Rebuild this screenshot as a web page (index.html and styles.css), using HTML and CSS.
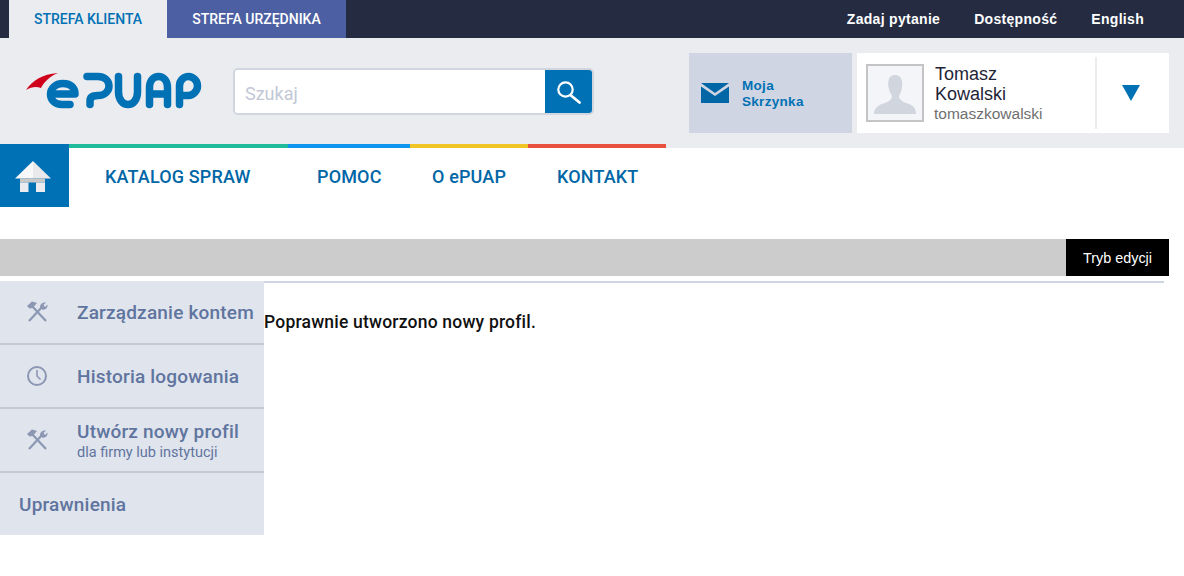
FILE: index.html
```html
<!DOCTYPE html>
<html lang="pl">
  <head>
    <meta charset="UTF-8" />
    <title>ePUAP</title>
    <link rel="stylesheet" href="styles.css">
  </head>
  <body>
    <div class="topbar">
      <div class="zones">
        <a class="zone zone-active">STREFA KLIENTA</a>
        <a class="zone">STREFA URZĘDNIKA</a>
      </div>
      <div class="top-links">
        <a>Zadaj pytanie</a>
        <a>Dostępność</a>
        <a>English</a>
      </div>
    </div>

    <header class="masthead">
      <div class="logo">
        <svg width="178" height="40" viewBox="0 0 178 40">
          <path d="M1 20 C7 11 17 4 33 3 C25 6 19 12 16 18 C11 16 6 17 1 20 Z" fill="#d0021b" />
          <g fill="none" stroke="#0071b5" stroke-width="7.500" stroke-linecap="round" stroke-linejoin="round">
            <path d="M27 24 H50 C50 17 45 13.500 38 13.500 C30 13.500 25.500 19 25.500 24 C25.500 30 30 34.500 37 34.500 H45" />
            <path d="M62 6.500 H73 C80 6.500 84 11 84 16 C84 21 80 25.500 73 25.500 C68 25.500 65 27 65 31 V34.500" />
            <path d="M93.500 6.500 V22 C93.500 30 98 34.500 103 34.500 C108 34.500 112.500 30 112.500 22 V6.500" />
            <path d="M124.500 34.500 V18 C124.500 10 129 6.500 133.500 6.500 C138 6.500 142.500 10 142.500 18 V34.500 M124.500 24 H142.500" />
            <path d="M154.500 34.500 V16 C154.500 10 159 6.500 163.500 6.500 C168 6.500 172.500 10.500 172.500 16 C172.500 21 168 25.500 163.500 25.500 H157" />
          </g>
        </svg>
      </div>
      <form class="search">
        <input class="search-input" type="text" placeholder="Szukaj" />
        <button class="search-btn" type="button">
          <svg width="26" height="26" viewBox="0 0 26 26" fill="none" stroke="#fff" stroke-width="2.200">
            <circle cx="9.500" cy="10.500" r="7.200" />
            <path d="M15 16.500 L23.500 23.500" stroke-width="2.800" stroke-linecap="round" />
          </svg>
        </button>
      </form>
      <a class="mailbox">
        <svg width="28" height="20" viewBox="0 0 28 20" fill="#0066a6">
          <path d="M0 0 H28 L14 10 Z" />
          <path d="M0 3.500 L14 13 L28 3.500 V20 H0 Z" />
        </svg>
        <span class="mailbox-label">Moja<br>Skrzynka</span>
      </a>
      <div class="user">
        <div class="avatar">
          <svg width="54" height="54" viewBox="0 0 54 54" fill="#d0d5de">
            <path d="M27 9 C33 9 35 14 34 21 C33.500 25 32 28 31 30 C31 34 35 36 41 38 C46 40 48 43 48 48 H6 C6 43 9 40 14 38 C20 36 24 34 24 30 C23 28 21 25 20.500 21 C19.500 14 21 9 27 9 Z" />
          </svg>
        </div>
        <div class="user-info">
          <div class="user-name">Tomasz Kowalski</div>
          <div class="user-login">tomaszkowalski</div>
        </div>
        <div class="user-toggle"><span class="arrow"></span></div>
      </div>
    </header>

    <nav class="mainnav">
      <a class="home">
        <svg width="36" height="32" viewBox="0 0 36 32">
          <path d="M18 0 L36 17.500 H18 Z" fill="#e9e9ec" />
          <path d="M18 0 L0 17.500 H18 Z" fill="#f8f8f8" />
          <path d="M5 17.500 H30 V21.500 H5 Z" fill="#c9c9c9" />
          <path d="M5 21.500 H13.500 V31 H5 Z M21 21.500 H30 V31 H21 Z" fill="#ebecf0" />
        </svg>
      </a>
      <div class="nav-items">
        <a class="nav-item nav-green">KATALOG SPRAW</a>
        <a class="nav-item nav-blue">POMOC</a>
        <a class="nav-item nav-yellow">O ePUAP</a>
        <a class="nav-item nav-red">KONTAKT</a>
      </div>
    </nav>

    <div class="editbar">
      <a class="edit-btn">Tryb edycji</a>
    </div>

    <main class="layout">
      <aside class="sidemenu">
        <a class="side-item">
          <svg class="side-icon" width="22" height="22" viewBox="0 0 22 22" fill="none" stroke="#8b97b3" stroke-width="2.200">
            <path d="M6 5 L20 20" />
            <path d="M17 5 L3 20" />
            <path d="M1 5 L6 0.500 L11 2 L6.500 7 L3.500 7.500 Z" fill="#8b97b3" stroke="none" />
            <path d="M14 6 C14 3 17 1 20 1.500 L17.500 4 L19 6 L21.500 3.500 C22 7 19 9.500 16 8.500 Z" fill="#8b97b3" stroke="none" />
          </svg>
          <span class="side-title">Zarządzanie kontem</span>
        </a>
        <a class="side-item">
          <svg class="side-icon" width="22" height="22" viewBox="0 0 22 22" fill="none" stroke="#8b97b3" stroke-width="2">
            <circle cx="11" cy="11" r="9" />
            <path d="M11 5 V11 L14.500 14.500" stroke-width="1.600" />
          </svg>
          <span class="side-title">Historia logowania</span>
        </a>
        <a class="side-item">
          <svg class="side-icon" width="22" height="22" viewBox="0 0 22 22" fill="none" stroke="#8b97b3" stroke-width="2.200">
            <path d="M6 5 L20 20" />
            <path d="M17 5 L3 20" />
            <path d="M1 5 L6 0.500 L11 2 L6.500 7 L3.500 7.500 Z" fill="#8b97b3" stroke="none" />
            <path d="M14 6 C14 3 17 1 20 1.500 L17.500 4 L19 6 L21.500 3.500 C22 7 19 9.500 16 8.500 Z" fill="#8b97b3" stroke="none" />
          </svg>
          <span>
            <span class="side-title">Utwórz nowy profil</span>
            <span class="side-sub">dla firmy lub instytucji</span>
          </span>
        </a>
        <a class="side-item side-plain">
          <span class="side-title">Uprawnienia</span>
        </a>
      </aside>
      <section class="content">
        <p class="message">Poprawnie utworzono nowy profil.</p>
      </section>
    </main>
  </body>
</html>
```

FILE: styles.css
```css
* {
  box-sizing: border-box;
}

body {
  margin: 0;
  background-color: #ffffff;
  font-family: "Liberation Sans", Arial, sans-serif;
  color: #000;
}

a {
  text-decoration: none;
}

/* top bar */
.topbar {
  display: flex;
  justify-content: space-between;
  height: 38px;
  background-color: #252c42;
  padding-left: 9px;
}

.zones {
  display: flex;
}

.zone {
  display: flex;
  align-items: center;
  justify-content: center;
  width: 179px;
  background-color: #4d5fa3;
  color: #fff;
  font-family: Roboto, sans-serif;
  font-size: 14px;
  font-weight: 500;
}

.zone-active {
  width: 158px;
  background-color: #ebecf0;
  color: #0071b5;
}

.top-links {
  display: flex;
  align-items: center;
  gap: 34px;
  padding-right: 40px;
}

.top-links a {
  color: #fff;
  font-size: 14px;
  font-weight: 700;
  letter-spacing: 0.3px;
}

/* header */
.masthead {
  display: flex;
  height: 110px;
  background-color: #ebecf0;
  padding: 15px 15px 0 25px;
}

.logo {
  width: 208px;
  padding-top: 17px;
}

.search {
  display: flex;
  width: 361px;
  height: 47px;
  margin-top: 15px;
  border: 2px solid #d0d5e0;
  border-radius: 5px;
  background-color: #fff;
  overflow: hidden;
}

.search-input {
  flex: 1;
  min-width: 0;
  padding: 3px 10px 0;
  border: none;
  outline: none;
  font-family: Roboto, sans-serif;
  font-size: 18px;
}

.search-input::placeholder {
  color: #c2c8d6;
  opacity: 1;
}

.search-btn {
  display: flex;
  align-items: center;
  justify-content: center;
  width: 47px;
  padding: 0;
  border: none;
  background-color: #0071b5;
}

.mailbox {
  display: flex;
  align-items: center;
  gap: 13px;
  width: 163px;
  height: 80px;
  margin-left: 95px;
  padding-left: 12px;
  background-color: #cfd5e2;
  color: #0071b5;
  font-size: 13.500px;
  font-weight: 700;
  line-height: 16px;
  letter-spacing: 0.3px;
}

.mailbox-label {
  padding-top: 2px;
}

.user {
  display: flex;
  width: 312px;
  height: 80px;
  margin-left: 5px;
  padding: 4px 0 4px 9px;
  background-color: #fff;
}

.avatar {
  width: 58px;
  height: 58px;
  margin-top: 7px;
  border: 2px solid #c4c4c4;
  background-color: #f4f5f8;
  flex-shrink: 0;
}

.user-info {
  width: 171px;
  padding: 7px 0 0 10px;
}

.user-name {
  width: 90px;
  padding-left: 1px;
  color: #1f2437;
  font-size: 18px;
  line-height: 20px;
}

.user-login {
  color: #6f6f6f;
  font-size: 15.500px;
  line-height: 20px;
}

.user-toggle {
  display: flex;
  align-items: center;
  justify-content: center;
  flex: 1;
  padding-right: 4px;
  border-left: 2px solid #ebecf0;
}

.arrow {
  width: 0;
  height: 0;
  border-left: 9px solid transparent;
  border-right: 9px solid transparent;
  border-top: 16px solid #0071b5;
}

/* main navigation */
.mainnav {
  display: flex;
  height: 63px;
  margin-top: -4px;
}

.home {
  display: flex;
  justify-content: center;
  align-items: flex-start;
  width: 69px;
  padding: 17px 3px 0 0;
  background-color: #0071b5;
}

.nav-items {
  display: flex;
}

.nav-item {
  height: 63px;
  padding-top: 18px;
  border-top: 4px solid;
  color: #0066a6;
  font-family: Roboto, sans-serif;
  font-size: 18px;
  font-weight: 500;
  letter-spacing: 0.15px;
  background-color: #fff;
}

.nav-green {
  width: 219px;
  padding-left: 36px;
  border-color: #1fbc9c;
}

.nav-blue {
  width: 122px;
  padding-left: 29px;
  border-color: #0d96ef;
}

.nav-yellow {
  width: 118px;
  padding-left: 22px;
  border-color: #f0c424;
}

.nav-red {
  width: 138px;
  padding-left: 29px;
  border-color: #e9503e;
}

/* edit bar */
.editbar {
  display: flex;
  justify-content: flex-end;
  height: 37px;
  margin: 32px 15px 0 0;
  background-color: #cccccc;
}

.edit-btn {
  display: flex;
  align-items: center;
  justify-content: center;
  width: 103px;
  background-color: #000;
  color: #fff;
  font-size: 14.400px;
}

/* page body */
.layout {
  display: flex;
  margin-top: 5px;
}

.sidemenu {
  width: 264px;
  flex-shrink: 0;
  background-color: #e0e4ed;
}

.side-item {
  display: flex;
  align-items: center;
  height: 64px;
  padding-left: 26px;
  gap: 29px;
  border-bottom: 2px solid #c3c8d4;
}

.side-plain {
  height: 62px;
  padding-left: 19px;
  border-bottom: none;
}

.side-title {
  display: block;
  color: #5f749e;
  font-family: Roboto, sans-serif;
  font-size: 19px;
  font-weight: 500;
  letter-spacing: 0.2px;
}

.side-sub {
  display: block;
  margin-top: 1px;
  color: #5f749e;
  font-family: Roboto, sans-serif;
  font-size: 14.500px;
}

.side-icon {
  flex-shrink: 0;
}

.content {
  flex: 1;
  margin-right: 20px;
  border-top: 2px solid #d0d5e5;
}

.message {
  margin: 29px 0 0;
  color: #111;
  font-family: Roboto, sans-serif;
  font-size: 17.500px;
  font-weight: 500;
  letter-spacing: 0.2px;
}
```
